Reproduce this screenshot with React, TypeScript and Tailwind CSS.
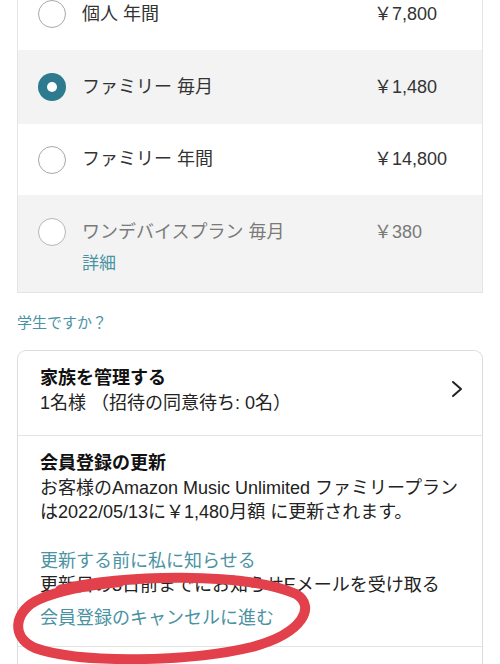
const plans = [
  { name: "個人 年間", price: "￥7,800", row: "h-[72px] bg-white" },
  { name: "ファミリー 毎月", price: "￥1,480", row: "h-[74px] bg-[#f3f3f3]", selected: true },
  { name: "ファミリー 年間", price: "￥14,800", row: "h-[71px] bg-white" },
]

function Radio({ selected, muted }: { selected?: boolean; muted?: boolean }) {
  if (selected) {
    return (
      <span className="flex h-[28px] w-[28px] shrink-0 items-center justify-center rounded-full bg-[#2e7a8f]">
        <span className="h-[10px] w-[10px] rounded-full bg-white" />
      </span>
    )
  }
  return (
    <span
      className={`h-[28px] w-[28px] shrink-0 rounded-full border-[1.5px] ${muted ? "border-[#b5b5b5]" : "border-[#a8a8a8]"} bg-white`}
    />
  )
}

export default function App() {
  return (
    <div
      className="relative h-[664px] w-[500px] overflow-hidden bg-white text-[#222]"
      style={{ fontFamily: '"Liberation Sans", "Noto Sans CJK JP", sans-serif' }}
    >
      <div className="-mt-[22px] px-[17px]">
        <div className="border-x border-[#e4e4e4]">
          {plans.map((p) => (
            <div key={p.name} className={`flex items-center pl-[20px] ${p.row}`}>
              <Radio selected={p.selected} />
              <span className="ml-[16px] w-[292px] text-[18px] text-[#333]">{p.name}</span>
              <span className="text-[18px] text-[#333]">{p.price}</span>
            </div>
          ))}
          <div className="border-b border-[#e4e4e4] bg-[#f3f3f3] pb-[16px] pl-[20px] pt-[23px]">
            <div className="flex items-center">
              <Radio muted />
              <span className="ml-[16px] w-[292px] text-[18px] text-[#7a7a7a]">ワンデバイスプラン 毎月</span>
              <span className="text-[18px] text-[#7a7a7a]">￥380</span>
            </div>
            <div className="ml-[44px] mt-[6px] text-[17px] leading-[24px] text-[#4a93a3]">詳細</div>
          </div>
        </div>

        <div className="mt-[19px] text-[15px] leading-[22px] text-[#4a93a3]">学生ですか？</div>

        <div className="mt-[16px] rounded-t-[9px] border border-b-0 border-[#dcdcdc]">
          <div className="flex items-center border-b border-[#e4e4e4] pb-[20px] pl-[22px] pr-[18px] pt-[15px]">
            <div className="flex-1 text-[18px] leading-[24.5px]">
              <div className="font-bold text-[#111]">家族を管理する</div>
              <div className="text-[#222]">1名様 （招待の同意待ち: 0名）</div>
            </div>
            <svg width="14" height="20" viewBox="0 0 14 20" className="mb-[4px]">
              <path d="M3 3l8 7-8 7" fill="none" stroke="#222" strokeWidth="2" strokeLinecap="round" strokeLinejoin="round" />
            </svg>
          </div>
          <div className="border-b border-[#e4e4e4] pb-[16px] pl-[22px] pr-[16px] pt-[15px] text-[18px] leading-[24.5px]">
            <div className="font-bold text-[#111]">会員登録の更新</div>
            <div className="text-[#222]">お客様のAmazon Music Unlimited ファミリープラン</div>
            <div className="text-[#222]">は2022/05/13に￥1,480月額 に更新されます。</div>
            <div className="mt-[24px] text-[#4a93a3]">更新する前に私に知らせる</div>
            <div className="text-[#222]">更新日の3日前までにお知らせEメールを受け取る</div>
            <div className="mt-[8px] text-[#4a93a3]">会員登録のキャンセルに進む</div>
          </div>
          <div className="h-[40px]" />
        </div>
      </div>

      <svg className="pointer-events-none absolute left-0 top-0" width="500" height="664" viewBox="0 0 500 664">
        <path
          d="M60 590 C 120 574, 245 572, 296 594 C 316 606, 304 633, 252 647 C 190 662, 80 664, 35 648 C 10 637, 14 610, 40 599 C 60 590, 90 585, 120 582"
          fill="none"
          stroke="#e2404a"
          strokeWidth="10"
          strokeLinecap="round"
        />
      </svg>
    </div>
  )
}
